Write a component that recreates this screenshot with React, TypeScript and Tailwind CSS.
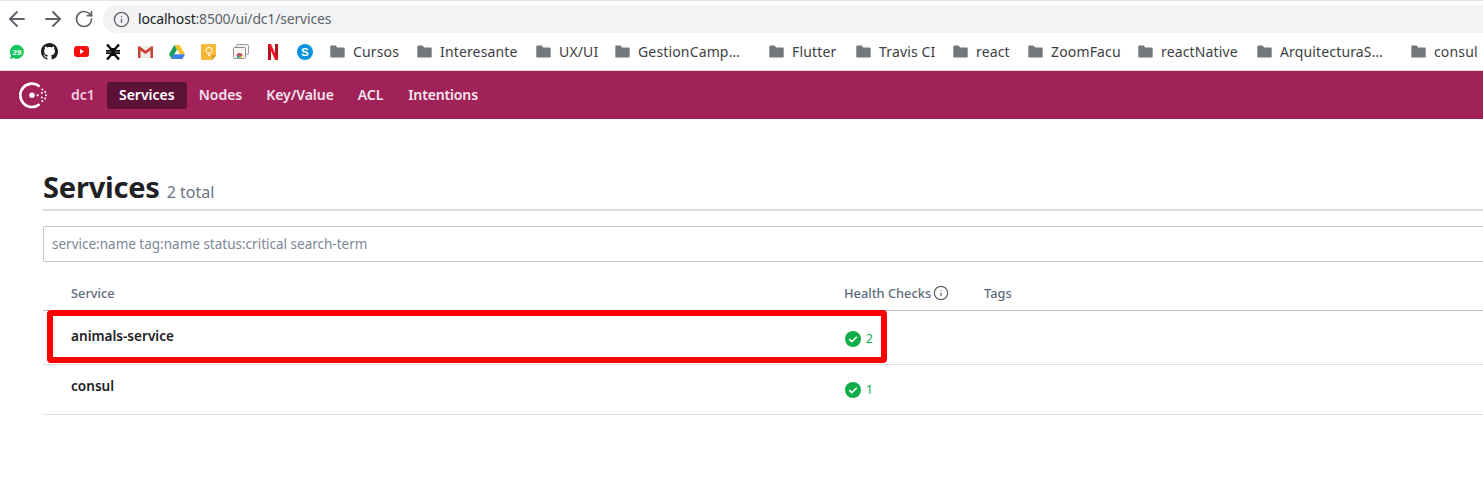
import React from "react";
import { ArrowLeft, ArrowRight, RotateCw, Info } from "lucide-react";

const bookmarks = [
  { label: "Cursos", width: "w-[87px]" },
  { label: "Interesante", width: "w-[119px]" },
  { label: "UX/UI", width: "w-[79px]" },
  { label: "GestionCamp…", width: "w-[154px]" },
  { label: "Flutter", width: "w-[87px]" },
  { label: "Travis CI", width: "w-[97px]" },
  { label: "react", width: "w-[75px]" },
  { label: "ZoomFacu", width: "w-[110px]" },
  { label: "reactNative", width: "w-[119px]" },
  { label: "ArquitecturaS…", width: "w-[154px]" },
  { label: "consul", width: "w-[72px]" },
];

const FolderIcon = () => (
  <svg width="15" height="13" viewBox="0 0 15 13" className="shrink-0">
    <path d="M1.4 0.5h4.2l1.6 1.9h6.4c.6 0 1.1.5 1.1 1.1v8c0 .6-.5 1.1-1.1 1.1H1.4c-.6 0-1.1-.5-1.1-1.1V1.6C.3 1 .8.5 1.4.5z" fill="#75787b" />
  </svg>
);

const WhatsappBadge = () => (
  <svg width="16" height="16" viewBox="0 0 16 16">
    <path d="M8 .8a7 7 0 0 0-6 10.7L1 15l3.6-1A7 7 0 1 0 8 .8z" fill="#12c75a" />
    <text x="8" y="10.8" textAnchor="middle" fontSize="8" fontWeight="700" fill="#fff" fontFamily="Liberation Sans, sans-serif">29</text>
  </svg>
);

const GithubIcon = () => (
  <svg width="17" height="17" viewBox="0 0 16 16" fill="#1b1f23">
    <path d="M8 0C3.58 0 0 3.58 0 8c0 3.54 2.29 6.53 5.47 7.59.4.07.55-.17.55-.38 0-.19-.01-.82-.01-1.49-2.01.37-2.53-.49-2.69-.94-.09-.23-.48-.94-.82-1.13-.28-.15-.68-.52-.01-.53.63-.01 1.08.58 1.23.82.72 1.21 1.87.87 2.33.66.07-.52.28-.87.51-1.07-1.78-.2-3.64-.89-3.64-3.95 0-.87.31-1.59.82-2.15-.08-.2-.36-1.02.08-2.12 0 0 .67-.21 2.2.82.64-.18 1.32-.27 2-.27s1.36.09 2 .27c1.53-1.04 2.2-.82 2.2-.82.44 1.1.16 1.92.08 2.12.51.56.82 1.27.82 2.15 0 3.07-1.87 3.75-3.65 3.95.29.25.54.73.54 1.48 0 1.07-.01 1.93-.01 2.2 0 .21.15.46.55.38A8.01 8.01 0 0 0 16 8c0-4.42-3.58-8-8-8z" />
  </svg>
);

const YoutubeIcon = () => (
  <svg width="15" height="11" viewBox="0 0 15 11">
    <rect width="15" height="11" rx="3" fill="#f50f0f" />
    <path d="M6 3l4 2.5L6 8z" fill="#fff" />
  </svg>
);

const UtnIcon = () => (
  <svg width="14" height="16" viewBox="0 0 14 16" fill="none" stroke="#0a0a0a">
    <path d="M1 .5L5.5 5.5h3L13 .5M1 15.5l4.5-5h3l4.5 5" strokeWidth="2.4" />
    <path d="M7 4v8" strokeWidth="3" />
    <path d="M0 6.8h14M0 9.2h14" strokeWidth="1.7" />
  </svg>
);

const GmailIcon = () => (
  <svg width="15" height="12" viewBox="0 0 15 12">
    <rect width="15" height="12" rx="1" fill="#ececec" />
    <path d="M0 1v11h2.5V4.4L7.5 8l5-3.6V12H15V1l-1-1-6.5 4.7L1 0z" fill="#c8402f" />
  </svg>
);

const DriveIcon = () => (
  <svg width="16" height="14" viewBox="0 0 16 14">
    <path d="M5.4 0h5.2l5.4 9.2h-5.2z" fill="#f7c32d" />
    <path d="M5.4 0l2.6 4.6L2.6 14 0 9.2z" fill="#1a9d5a" />
    <path d="M5 9.2h11L13.4 14H2.6z" fill="#3f7fe8" />
  </svg>
);

const KeepIcon = () => (
  <svg width="16" height="16" viewBox="0 0 16 16">
    <path d="M1 0h14v11.5L11 16H1a1 1 0 0 1-1-1V1a1 1 0 0 1 1-1z" fill="#f5b93a" />
    <path d="M15.6 11.2L11 16v-4.8z" fill="#d79a25" />
    <circle cx="8" cy="6.4" r="3" fill="none" stroke="#fff" strokeWidth="1" />
    <path d="M6.8 10h2.4M7 11.6h2" stroke="#fff" strokeWidth="1" />
  </svg>
);

const ChromeAppsIcon = () => (
  <svg width="16" height="15" viewBox="0 0 16 15">
    <rect x="3.5" y=".5" width="12" height="10" rx="1" fill="#f0f0f0" stroke="#9a9a9a" />
    <rect x=".5" y="3.5" width="12" height="11" rx="1" fill="#f4f4f4" stroke="#8f8f8f" />
    <path d="M3.5 12a3 3 0 0 1 6 0z" fill="#d9473d" />
    <path d="M3.5 12h3v2h-2z" fill="#3aa757" />
    <path d="M6.5 12h3l-1 2h-2z" fill="#f4c20d" />
    <circle cx="6.5" cy="12" r="1.2" fill="#4285f4" />
  </svg>
);

const NetflixIcon = () => (
  <svg width="10" height="16" viewBox="0 0 10 16">
    <path d="M0 0h3v16H0z" fill="#b0111a" />
    <path d="M7 0h3v16H7z" fill="#b0111a" />
    <path d="M0 0h3l7 16H7z" fill="#ea1a24" />
  </svg>
);

const SkypeIcon = () => (
  <svg width="16" height="16" viewBox="0 0 16 16">
    <circle cx="8" cy="8" r="8" fill="#0b94de" />
    <text x="8" y="12" textAnchor="middle" fontSize="11.5" fontWeight="700" fill="#fff" fontFamily="Liberation Sans, sans-serif">S</text>
  </svg>
);

const ConsulLogo = () => (
  <svg width="29" height="29" viewBox="0 0 29 29" fill="#fff">
    <path d="M20.6 5.4A11.7 11.7 0 1 0 20.6 23.2" fill="none" stroke="#fff" strokeWidth="2.6" />
    <circle cx="13" cy="14.3" r="2.7" />
    <circle cx="18.6" cy="14.3" r="1.1" />
    <circle cx="23.3" cy="8.6" r="1" />
    <circle cx="26.2" cy="11" r="1" />
    <circle cx="22.8" cy="12" r="1" />
    <circle cx="27" cy="14.3" r="1" />
    <circle cx="22.8" cy="16.4" r="1" />
    <circle cx="26.2" cy="17.6" r="1" />
    <circle cx="23.3" cy="20" r="1" />
  </svg>
);

const HealthyIcon = () => (
  <svg width="16" height="16" viewBox="0 0 16 16">
    <circle cx="8" cy="8" r="8" fill="#10ad4b" />
    <path d="M4.2 8.2l2.6 2.5 5-5" fill="none" stroke="#fff" strokeWidth="1.6" />
  </svg>
);

const appIcons = [
  <WhatsappBadge key="whatsapp" />,
  <GithubIcon key="github" />,
  <YoutubeIcon key="youtube" />,
  <UtnIcon key="utn" />,
  <GmailIcon key="gmail" />,
  <DriveIcon key="drive" />,
  <KeepIcon key="keep" />,
  <ChromeAppsIcon key="apps" />,
  <NetflixIcon key="netflix" />,
  <SkypeIcon key="skype" />,
];

const navItems = ["Nodes", "Key/Value", "ACL", "Intentions"];

const services = [
  { name: "animals-service", checks: 2, height: "h-[54px]", nameOffset: "pb-[3px]", checkOffset: "pt-[2px]" },
  { name: "consul", checks: 1, height: "h-[50px]", nameOffset: "pb-[6px]", checkOffset: "pt-0" },
];

export default function App() {
  return (
    <div className="relative w-[1483px] h-[490px] overflow-hidden bg-white font-['Noto_Sans',sans-serif]">
      {/* browser chrome */}
      <div className="h-[33px] pt-[4px] flex border-t border-[#e3e5e8]">
        <div className="w-[103px] h-7 flex items-center pl-[5px] text-[#5f6368]">
          <ArrowLeft size={24} strokeWidth={1.9} className="w-8 pr-2" />
          <ArrowRight size={24} strokeWidth={1.9} className="w-8 pr-0" />
          <RotateCw size={20} strokeWidth={2} className="w-7 pl-[2px]" />
        </div>
        <div className="flex-1 h-7 rounded-l-full bg-[#f1f3f4] flex items-center pl-[10px] gap-[8px]">
          <Info size={17} strokeWidth={1.9} className="text-[#5f6368]" />
          <span className="text-[14px] pb-[2px] tracking-[-0.18px] text-[#202124]">
            localhost<span className="text-[#5f6368]">:8500/ui/dc1/services</span>
          </span>
        </div>
      </div>
      <div className="h-[38px] flex items-center border-b border-[#dadce0] pl-[1px] text-[14px] tracking-[0.15px] text-[#3c4043]">
        {appIcons.map((icon, i) => (
          <div key={i} className="w-8 flex justify-center shrink-0">
            {icon}
          </div>
        ))}
        <div className="ml-[9px] flex">
          {bookmarks.map((b) => (
            <div key={b.label} className={`${b.width} shrink-0 flex items-center gap-[8px] whitespace-nowrap`}>
              <FolderIcon />
              <span>{b.label}</span>
            </div>
          ))}
        </div>
      </div>

      {/* consul nav */}
      <nav className="h-[48px] bg-[#a02258] flex items-center pl-[19px] text-[14px] font-semibold text-[#f6e4ee]">
        <ConsulLogo />
        <span className="ml-[23px] pb-[2px] text-[#f0cfe0]">dc1</span>
        <span className="ml-3 h-[27px] w-[80px] pb-[2px] rounded-[3px] bg-[#5c1136] text-white flex items-center justify-center">
          Services
        </span>
        <div className="ml-3 pb-[2px] flex gap-[24px]">
          {navItems.map((item) => (
            <span key={item} className={item === "Intentions" ? "tracking-[-0.15px] ml-[1px]" : "tracking-[-0.05px]"}>
              {item}
            </span>
          ))}
        </div>
      </nav>

      {/* page */}
      <main className="pl-[43px]">
        <div className="h-[92px] pt-[48px] border-b-2 border-[#d9dce2] flex items-baseline">
          <h1 className="text-[29px] leading-[40px] font-bold text-[#1f2124] tracking-[-0.2px]">Services</h1>
          <span className="ml-[7px] text-[16px] text-[#6a7383]">2 total</span>
        </div>
        <div className="mt-[15px] -mr-4 h-[36px] flex items-center pl-2 border border-[#c0c6d0] rounded-l-[2px] text-[13.5px] text-[#7c8797]">
          service:name tag:name status:critical search-term
        </div>
        <div className="h-[49px] flex items-end pb-[7px] pl-7 border-b border-[#b9bfca] text-[12.8px] font-medium text-[#5e6a7c]">
          <span className="w-[773px]">Service</span>
          <span className="w-[140px] flex items-center gap-[2px]">
            Health Checks
            <Info size={16} strokeWidth={1.8} className="text-[#5f6368]" />
          </span>
          <span>Tags</span>
        </div>
        {services.map((s) => (
          <div key={s.name} className={`${s.height} flex items-center pl-7 border-b border-[#dcdfe6]`}>
            <span className={`w-[774px] text-[13.6px] font-semibold text-[#1f2124] ${s.nameOffset}`}>{s.name}</span>
            <span className={`flex items-center gap-[5px] text-[12px] text-[#10ad4b] ${s.checkOffset}`}>
              <HealthyIcon />
              {s.checks}
            </span>
          </div>
        ))}
      </main>

      {/* annotation drawn on top of the table */}
      <div className="absolute left-[47px] top-[310px] w-[840px] h-[53px] border-[6px] border-[#fe0000] rounded-[4px]" />
    </div>
  );
}
